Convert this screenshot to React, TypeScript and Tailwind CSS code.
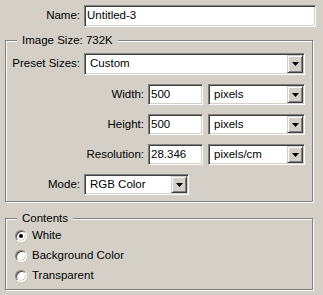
import React from "react";

const sunken =
  "border border-t-[#808080] border-l-[#808080] border-r-white border-b-white shadow-[inset_1px_1px_0_#404040,inset_-1px_-1px_0_#d4d0c8] bg-white";
const raised =
  "border border-t-[#d4d0c8] border-l-[#d4d0c8] border-r-[#404040] border-b-[#404040] shadow-[inset_1px_1px_0_#fff,inset_-1px_-1px_0_#808080] bg-[#d4d0c8]";
const etched =
  "relative border border-[#808080] shadow-[inset_1px_1px_0_#fff,1px_1px_0_#fff]";

function Arrow() {
  return (
    <svg width="7" height="4" viewBox="0 0 7 4" className="block">
      <path d="M0 0H7L3.5 4Z" fill="#000" />
    </svg>
  );
}

function Select({ value, w, h }: { value: string; w: string; h: string }) {
  return (
    <div className={`${sunken} ${w} ${h} p-[1px] flex items-stretch`}>
      <div className="flex-1 flex items-center pl-[4px] whitespace-nowrap overflow-hidden">{value}</div>
      <div className={`${raised} w-[16px] flex items-center justify-center`}>
        <Arrow />
      </div>
    </div>
  );
}

function Input({ value, w, h }: { value: string; w: string; h: string }) {
  return (
    <div className={`${sunken} ${w} ${h} flex items-center pl-[2px] whitespace-nowrap overflow-hidden`}>{value}</div>
  );
}

function Radio({ checked, label }: { checked?: boolean; label: string }) {
  return (
    <div className="h-[20px] flex items-center">
      <div className="w-[12px] h-[12px] rounded-full border border-t-[#808080] border-l-[#808080] border-r-white border-b-white shadow-[inset_1px_1px_0_#404040,inset_-1px_-1px_0_#d4d0c8] bg-white flex items-center justify-center">
        {checked && <div className="w-[4px] h-[4px] rounded-full bg-black" />}
      </div>
      <span className="ml-[5px]">{label}</span>
    </div>
  );
}

export default function App() {
  return (
    <div
      className="w-[323px] h-[295px] bg-[#d4d0c8] text-black text-[11.5px] leading-none overflow-hidden pt-[5px]"
      style={{ fontFamily: '"Liberation Sans", Arial, sans-serif' }}
    >
      <div className="flex items-center">
        <div className="w-[80px] text-right">Name:</div>
        <div className="w-[4px]" />
        <Input value="Untitled-3" w="w-[232px]" h="h-[22px]" />
      </div>

      <div className={`${etched} ml-[5px] mt-[13px] w-[308px] pt-[12px] pb-[6px]`}>
        <div className="absolute -top-[6px] left-[11px] px-[5px] bg-[#d4d0c8]">Image Size: 732K</div>
        <div className="flex items-center">
          <div className="w-[74px] text-right">Preset Sizes:</div>
          <div className="w-[4px]" />
          <Select value="Custom" w="w-[221px]" h="h-[22px]" />
        </div>
        <div className="flex flex-col gap-[9px] mt-[9px]">
          {[
            ["Width:", "500", "pixels"],
            ["Height:", "500", "pixels"],
            ["Resolution:", "28.346", "pixels/cm"],
          ].map(([l, v, u]) => (
            <div key={l} className="flex items-center">
              <div className="w-[138px] text-right">{l}</div>
              <div className="w-[4px]" />
              <Input value={v} w="w-[55px]" h="h-[21px]" />
              <div className="w-[5px]" />
              <Select value={u} w="w-[97px]" h="h-[21px]" />
            </div>
          ))}
          <div className="flex items-center">
            <div className="w-[74px] text-right">Mode:</div>
            <div className="w-[4px]" />
            <Select value="RGB Color" w="w-[105px]" h="h-[21px]" />
          </div>
        </div>
      </div>

      <div className={`${etched} ml-[5px] mt-[16px] w-[308px] pt-[7px] pb-[3px] pl-[9px]`}>
        <div className="absolute -top-[6px] left-[11px] px-[5px] bg-[#d4d0c8]">Contents</div>
        <Radio checked label="White" />
        <Radio label="Background Color" />
        <Radio label="Transparent" />
      </div>
    </div>
  );
}
